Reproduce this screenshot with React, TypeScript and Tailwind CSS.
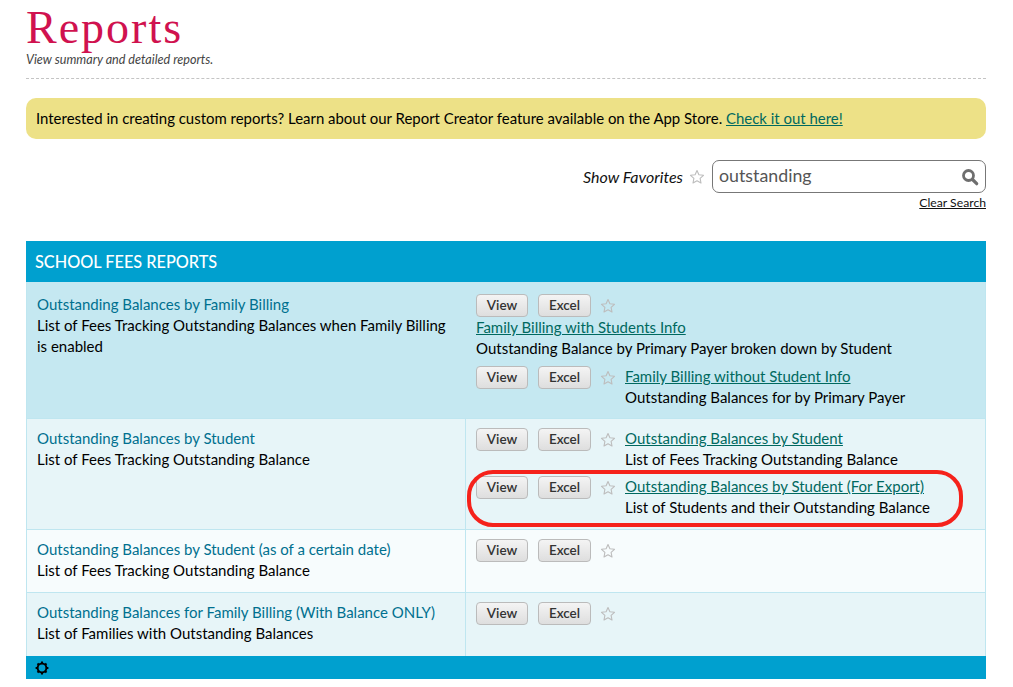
const Star = () => (
  <svg width="16" height="16" viewBox="0 0 16 16" className="shrink-0">
    <path d="M8 1.6l1.9 4.2 4.6.5-3.4 3.1.9 4.6L8 11.7 4 14l.9-4.6L1.5 6.3l4.6-.5z" fill="none" stroke="#bdbdbd" strokeWidth="1.1" strokeLinejoin="round" />
  </svg>
)

const Buttons = () => (
  <div className="flex items-center self-start shrink-0">
    <button className="w-[52px] h-[23px] border border-[#bbb] rounded-[4px] bg-gradient-to-b from-[#f4f4f4] to-[#dedede] text-[13.5px] font-semibold text-[#333] leading-none">View</button>
    <button className="w-[53px] h-[23px] ml-[10px] border border-[#bbb] rounded-[4px] bg-gradient-to-b from-[#f4f4f4] to-[#dedede] text-[13.5px] font-semibold text-[#333] leading-none">Excel</button>
    <span className="ml-[9px]"><Star /></span>
  </div>
)

const Linked = ({ title, desc }: { title: string; desc: string }) => (
  <div className="flex gap-[9px]">
    <Buttons />
    <div className="leading-[21px]">
      <a className="block text-[#00695f] underline">{title}</a>
      <p>{desc}</p>
    </div>
  </div>
)

const Left = ({ title, desc }: { title: string; desc: string }) => (
  <div className="w-[439px] shrink-0 pt-[9px] pl-[10px] pr-[14px] border-r border-[#bfe6f0] leading-[21px]">
    <a className="block text-[#00708f]">{title}</a>
    <p>{desc}</p>
  </div>
)

export default function App() {
  return (
    <div className="w-[1013px] h-[687px] overflow-hidden bg-white text-black pl-[26px] pr-[27px] text-[15px] font-['Lato',sans-serif]">
      <h1 className="pt-[6px] h-[51px] text-[46px] leading-[44px] tracking-[2px] text-[#d0124f] font-['Liberation_Serif',serif]">Reports</h1>
      <p className="h-[27px] italic text-[12.6px] leading-[17px] text-[#444]">View summary and detailed reports.</p>
      <div className="border-b border-dashed border-[#c4c4c4]"></div>
      <div className="mt-[19px] h-[41px] flex items-center px-[10px] rounded-[10px] bg-[#ede187]">
        <span className="text-[14.95px]">Interested in creating custom reports? Learn about our Report Creator feature available on the App Store. <a className="text-[#00695f] underline">Check it out here!</a></span>
      </div>

      <div className="mt-[21px] flex justify-end items-center h-[33px]">
        <span className="italic text-[16px] text-[#111]">Show Favorites</span>
        <span className="ml-[6px]"><Star /></span>
        <div className="ml-[7px] w-[274px] h-[33px] flex items-center justify-between border border-[#777] rounded-[7px] px-[6px]">
          <span className="pb-[2px] text-[17.8px] text-[#555]">outstanding</span>
          <svg width="18" height="18" viewBox="0 0 18 18">
            <circle cx="7.5" cy="7.5" r="5" fill="none" stroke="#6e6e6e" strokeWidth="2.8" />
            <path d="M11.5 11.5l4.2 4.2" stroke="#6e6e6e" strokeWidth="3.2" strokeLinecap="round" />
          </svg>
        </div>
      </div>
      <div className="flex justify-end h-[16px] mt-[2px]">
        <a className="text-[12.2px] leading-[16px] underline text-[#111]">Clear Search</a>
      </div>

      <div className="mt-[30px] h-[41px] flex items-center pl-[9px] pt-[2px] bg-[#00a0cf] text-white text-[16.3px] font-medium">SCHOOL FEES REPORTS</div>

      <div className="border-x border-[#bfe6f0]">
        <div className="flex h-[137px] bg-[#c5e8f1] border-b border-[#bfe6f0]">
          <div className="w-[439px] shrink-0 pl-[10px] pr-[14px] pt-[12px] leading-[21px]">
            <a className="block text-[#00708f]">Outstanding Balances by Family Billing</a>
            <p>List of Fees Tracking Outstanding Balances when Family Billing is enabled</p>
          </div>
          <div className="pl-[10px] pt-[12px]">
            <Buttons />
            <div className="leading-[21px]">
              <a className="block text-[#00695f] underline">Family Billing with Students Info</a>
              <p>Outstanding Balance by Primary Payer broken down by Student</p>
            </div>
            <div className="mt-[7px]">
              <Linked title="Family Billing without Student Info" desc="Outstanding Balances for by Primary Payer" />
            </div>
          </div>
        </div>

        <div className="flex h-[111px] bg-[#e7f5f8] border-b border-[#bfe6f0]">
          <Left title="Outstanding Balances by Student" desc="List of Fees Tracking Outstanding Balance" />
          <div className="pl-[10px] pt-[9px]">
            <Linked title="Outstanding Balances by Student" desc="List of Fees Tracking Outstanding Balance" />
            <div className="relative mt-[6px]">
              <Linked title="Outstanding Balances by Student (For Export)" desc="List of Students and their Outstanding Balance" />
              <div className="absolute left-[-9px] top-[-6px] w-[496px] h-[57px] border-[4px] border-[#f5221b] rounded-[26px]"></div>
            </div>
          </div>
        </div>

        <div className="flex h-[63px] bg-[#f7fcfd] border-b border-[#bfe6f0]">
          <Left title="Outstanding Balances by Student (as of a certain date)" desc="List of Fees Tracking Outstanding Balance" />
          <div className="pl-[10px] pt-[9px]"><Buttons /></div>
        </div>

        <div className="flex h-[63px] bg-[#e7f5f8]">
          <Left title="Outstanding Balances for Family Billing (With Balance ONLY)" desc="List of Families with Outstanding Balances" />
          <div className="pl-[10px] pt-[9px]"><Buttons /></div>
        </div>
      </div>

      <div className="h-[23px] flex items-center pl-[9px] bg-[#00a0cf]">
        <svg width="14" height="14" viewBox="0 0 14 14">
          <circle cx="7" cy="7" r="4.4" fill="none" stroke="#000" strokeWidth="2" />
          <path d="M7 .6v2.4M7 11v2.4M.6 7H3M11 7h2.4M2.5 2.5l1.7 1.7M9.8 9.8l1.7 1.7M11.5 2.5L9.8 4.2M4.2 9.8l-1.7 1.7" stroke="#000" strokeWidth="2" />
        </svg>
      </div>
    </div>
  )
}
